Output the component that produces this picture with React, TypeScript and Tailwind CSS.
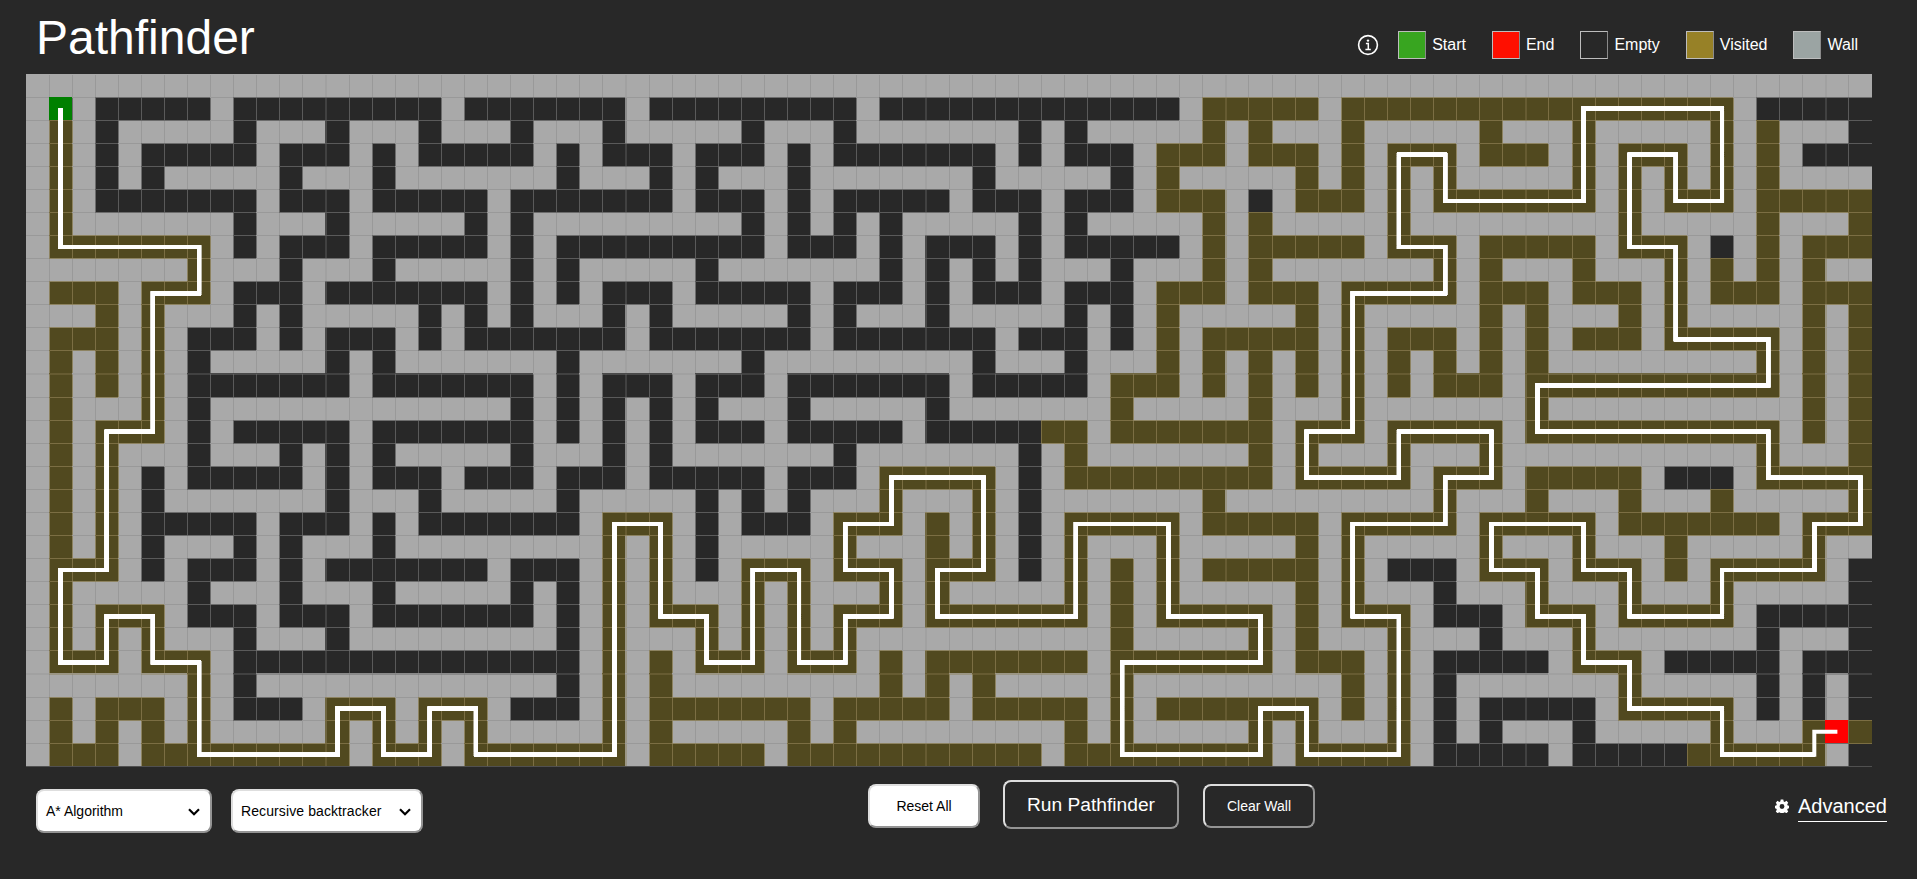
import React from "react";

const CELL = 23.075;
const COLS = 80;
const ROWS = 30;

// "#" wall, "." empty, "v" visited, "S" start, "E" end
const MAZE: string[] = [
  "####################" + "####################" + "####################" + "####################",
  "#S#.....#.........#." + "......#.........#..." + "..........#vvvvv#vvv" + "vvvvvvvvvvvvvv#.....",
  "#v#.#####.###.###.##" + "#.###.#####.###.####" + "###.#.#####v#v###v##" + "###v###v#####v#v###.",
  "#v#.#.....#...#.#..." + "..#.#...#...#.#....." + "..#.#...#vvv#vvv#v#v" + "vv#vvv#v#vvv#v#v#...",
  "#v#.#.#####.###.####" + "###.###.#.###.######" + "#.#####.#v#####v#v#v" + "#v#####v#v#v#v#v####",
  "#v#.......#...#....." + "#.......#...#.#....." + "#...#...#vvv#.#vvv#v" + "#vvvvvvv#v#vvv#vvvvv",
  "#v#######.###.#####." + "#.#########.#.#.#.##" + "###.#.#####v#v#####v" + "#########v#####v###v",
  "#vvvvvvv#.#...#....." + "#.#.........#...#.#." + "..#.#.....#v#vvvvv#v" + "vv#vvvvv#vvv#.#v#vvv",
  "#######v###.###.####" + "#.#.#####.#######.#." + "#.#.###.###v#v######" + "#v#v###v###v#v#v#v##",
  "#vvv#vvv#...#......." + "#.#.#...#.....#...#." + "#...#...#vvv#vvv#vvv" + "vv#vvv#vvv#v#vvv#vvv",
  "###v#v###.#.#####.#." + "#.###.#.#####.#.###." + "#####.#.#v#####v#v##" + "###v#v###v#v#####v#v",
  "#vvv#v#...#.#...#.#." + "......#.......#....." + "..#...#.#v#vvvvv#v#v" + "vv#v#v#vvv#vvvvv#v#v",
  "#v#v#v#.#####.#.####" + "###.#######.########" + "#.###.###v#v#v#v#v#v" + "#v#v#v#########v#v#v",
  "#v#v#v#.......#....." + "..#.#...#...#......." + "#.....#vvv#v#v#v#v#v" + "#vvv#vvvvvvvvvvv#v#v",
  "#v###v#.############" + "#.#.#.#.#.###.#####." + "#######v#####v###v##" + "#####v###########v#v",
  "#v#vvv#.#.....#....." + "..#.#.#.#...#.....#." + "....vv#vvvvvvv#vvv#v" + "vvvv#vvvvvvvvvvv#v#v",
  "#v#v###.###.#.#.####" + "#.###.#.#######.####" + "###.#v#######v#v###v" + "###v###########v###v",
  "#v#v#.#.....#.#...#." + "..#...#.....#...#vvv" + "vv#.#vvvvvvvvv#vvvvv" + "#vvv#vvvvv#...#vvvvv",
  "#v#v#.#######.###.##" + "###.#####.#.#.###v##" + "#v#.#######v########" + "#v###v###v###v#####v",
  "#v#v#.....#...#.#..." + "....#vvv#.#...#vvv#v" + "#v#.#vvvvv#vvvvv#vvv" + "vv#vvvvv#vvvvvvv#vvv",
  "#v#v#.###.#.###.####" + "#####v#v#.#####v###v" + "#v#.#v###v#####v#v##" + "###v###v###v#####v##",
  "#vvv#.#...#.#......." + "#...#v#v#.#vvv#vvv#v" + "vv#.#v#v#v#vvvvv#v#." + "..#vvv#vvv#v#vvvvv#.",
  "#v#####.###.###.####" + "#.#.#v#v###v#v###v#v" + "#####v#v#v#####v#v##" + "#.###v###v###v#####.",
  "#v#vvv#...#...#....." + "..#.#v#vvv#v#v#vvv#v" + "vvvvvv#v#vvvvv#v#vvv" + "#...#vvv#vvvvv#.....",
  "#v#v#v###.###.######" + "###.#v###v#v#v#v####" + "#######v#####v#v###v" + "###.###v#######.###.",
  "#vvv#vvv#..........." + "....#v#v#vvv#vvv#v#v" + "vvvvvv#vvvvvvv#vvv#v" + "#.....#vvv#.....#...",
  "#######v#.##########" + "###.#v#v#########v#v" + "#v#####v#########v#v" + "#.#######v#####.#.#.",
  "#v#vvv#v#...#vvv#vvv" + "#...#v#vvvvvvv#vvvvv" + "#vvvvv#v#vvvvvvv#v#v" + "#.#.....#vvvvv#.#.#.",
  "#v#v#v#v#####v#v#v#v" + "#####v#v#####v#v####" + "#####v#v#####v#v###v" + "#.#.###.#####v###vEv",
  "#vvv#vvvvvvvvv#vvv#v" + "vvvvvv#vvvvv#vvvvvvv" + "vvvv#vvvvvvvvv#vvvvv" + "#.....#.....vvvvvv#.",
];

const ROUTE: [number, number][] = [
  [1, 1], [1, 7], [7, 7], [7, 9], [5, 9], [5, 15], [3, 15], [3, 21], [1, 21], [1, 25],
  [3, 25], [3, 23], [5, 23], [5, 25], [7, 25], [7, 29], [13, 29], [13, 27], [15, 27], [15, 29],
  [17, 29], [17, 27], [19, 27], [19, 29], [25, 29], [25, 19], [27, 19], [27, 23], [29, 23], [29, 25],
  [31, 25], [31, 21], [33, 21], [33, 25], [35, 25], [35, 23], [37, 23], [37, 21], [35, 21], [35, 19],
  [37, 19], [37, 17], [41, 17], [41, 21], [39, 21], [39, 23], [45, 23], [45, 19], [49, 19], [49, 23],
  [53, 23], [53, 25], [47, 25], [47, 29], [53, 29], [53, 27], [55, 27], [55, 29], [59, 29], [59, 23],
  [57, 23], [57, 19], [61, 19], [61, 17], [63, 17], [63, 15], [59, 15], [59, 17], [55, 17], [55, 15],
  [57, 15], [57, 9], [61, 9], [61, 7], [59, 7], [59, 3], [61, 3], [61, 5], [67, 5], [67, 1],
  [73, 1], [73, 5], [71, 5], [71, 3], [69, 3], [69, 7], [71, 7], [71, 11], [75, 11], [75, 13],
  [65, 13], [65, 15], [75, 15], [75, 17], [79, 17], [79, 19], [77, 19], [77, 21], [73, 21], [73, 23],
  [69, 23], [69, 21], [67, 21], [67, 19], [63, 19], [63, 21], [65, 21], [65, 23], [67, 23], [67, 25],
  [69, 25], [69, 27], [73, 27], [73, 29], [77, 29], [77, 28], [78, 28],
];

const FILLS: Record<string, string> = {
  "#": "#a9a9a9",
  ".": "#282828",
  v: "#51491f",
  S: "#008000",
  E: "#ff0000",
};

const edge = (i: number) => Math.floor(i * CELL);

const toPoints = (pts: [number, number][]) =>
  pts.map(([c, r]) => `${((c + 0.5) * CELL).toFixed(2)},${((r + 0.5) * CELL).toFixed(2)}`).join(" ");

function Runs() {
  const rects: React.ReactElement[] = [];
  MAZE.forEach((row, r) => {
    let c = 0;
    while (c < COLS) {
      let n = c + 1;
      while (n < COLS && row[n] === row[c]) n++;
      rects.push(
        <rect key={`${r}-${c}`} x={edge(c)} y={edge(r)} width={edge(n) - edge(c)} height={edge(r + 1) - edge(r)} fill={FILLS[row[c]]} />,
      );
      c = n;
    }
  });
  return <g shapeRendering="crispEdges">{rects}</g>;
}

// Colour of the hairline between two neighbouring cells.
const lineColour = (a: string, b: string) => {
  const pair = [a, b];
  if (pair.includes("v")) return pair.includes("#") ? "#8d8361" : "#7b6e43";
  if (a === "#" && b === "#") return "#999999";
  return pair.includes("#") ? "#6c6c6c" : "#5a5a5a";
};

const line = (i: number) => (i % 13 === 0 ? { size: 2, opacity: 0.5 } : { size: 1, opacity: 1 });

function GridLines() {
  const rects: React.ReactElement[] = [];
  for (let r = 0; r < ROWS; r++) {
    for (let c = 0; c < COLS; c++) {
      const cell = MAZE[r][c];
      if (c > 0) {
        const l = line(c);
        rects.push(
          <rect key={`v${r}-${c}`} x={edge(c)} y={edge(r) + 1} width={l.size} height={edge(r + 1) - edge(r) - 1} fill={lineColour(MAZE[r][c - 1], cell)} fillOpacity={l.opacity} />,
        );
      }
      if (r > 0) {
        const l = line(r);
        rects.push(
          <rect key={`h${r}-${c}`} x={edge(c)} y={edge(r)} width={edge(c + 1) - edge(c)} height={l.size} fill={lineColour(MAZE[r - 1][c], cell)} fillOpacity={l.opacity} />,
        );
      }
    }
  }
  return (
    <g shapeRendering="crispEdges">
      {rects}
      <rect x={0} y={692} width={1846} height={1} fill="#505050" />
    </g>
  );
}

function Endpoint({ col, row, kind }: { col: number; row: number; kind: string }) {
  return <rect x={edge(col)} y={edge(row)} width={23} height={23} fill={FILLS[kind]} shapeRendering="crispEdges" />;
}

function MazeBoard() {
  const body = toPoints(ROUTE.slice(0, -2));
  const whole = toPoints(ROUTE);
  return (
    <svg width="1846" height="693" viewBox="0 0 1846 693" className="block">
      <Runs />
      <GridLines />
      <Endpoint col={1} row={1} kind="S" />
      <Endpoint col={78} row={28} kind="E" />
      <g fill="none" stroke="#fff" strokeWidth="4">
        {Array.from({ length: 16 }, (_, i) => (
          <polyline key={i} points={body} />
        ))}
        <polyline points={whole} />
      </g>
    </svg>
  );
}

function LegendItem({ label, swatch }: { label: string; swatch: string }) {
  return (
    <div className="flex items-center gap-1.5">
      <span className={`block size-7 border border-t-[#bdbdbd] border-l-[#bdbdbd] border-r-[#8a8a8a] border-b-[#bdbdbd] ${swatch}`} />
      <span className="text-base leading-none">{label}</span>
    </div>
  );
}

function Chevron() {
  return (
    <svg width="12" height="8" viewBox="0 0 12 8" className="mt-0.5">
      <path d="M1 1.2 6 6.2 11 1.2" fill="none" stroke="#000" strokeWidth="2.2" />
    </svg>
  );
}

const OUTSET = "rounded-lg border-2 border-t-[#dedede] border-l-[#dedede] border-r-[#949494] border-b-[#949494]";

export default function App() {
  return (
    <div className="flex h-[879px] w-[1917px] flex-col overflow-hidden bg-[#282828] font-['Liberation_Sans',Arial,sans-serif] text-white">
      <header className="flex h-[74px] items-start justify-between pr-[59px] pl-9">
        <h1 className="pt-[10px] text-5xl leading-[55px]">Pathfinder</h1>
        <div className="flex items-center gap-[26px] pt-[31px]">
          <svg width="22" height="22" viewBox="0 0 22 22" className="mr-[-7px]">
            <circle cx="11" cy="11" r="9.4" fill="none" stroke="#fff" strokeWidth="1.6" />
            <circle cx="11" cy="6.6" r="1.2" fill="#fff" />
            <path d="M8.9 9.5h2.4v5.8M8.4 15.4h5.4" fill="none" stroke="#fff" strokeWidth="1.5" />
          </svg>
          <LegendItem label="Start" swatch="bg-[#38a520]" />
          <LegendItem label="End" swatch="bg-[#ff0f00]" />
          <LegendItem label="Empty" swatch="bg-[#282828]" />
          <LegendItem label="Visited" swatch="bg-[#978127]" />
          <LegendItem label="Wall" swatch="bg-[#9ba4a3]" />
        </div>
      </header>

      <main className="pl-[26px]">
        <MazeBoard />
      </main>

      <footer className="grid grid-cols-[868px_1fr_auto] pr-[30px] text-sm">
        <div className="flex gap-[19px] pt-[22px] pl-9 text-black">
          <button className={`flex h-11 w-44 items-center justify-between bg-white pr-2.5 pl-2 ${OUTSET}`}>
            <span>A* Algorithm</span>
            <Chevron />
          </button>
          <button className={`flex h-11 w-48 items-center justify-between bg-white pr-2.5 pl-2 ${OUTSET}`}>
            <span className="tracking-[0.1px]">Recursive backtracker</span>
            <Chevron />
          </button>
        </div>
        <div className="flex items-start pt-[13px]">
          <button className={`mt-1 h-11 w-28 bg-white text-black ${OUTSET}`}>Reset All</button>
          <button className={`ml-[23px] h-[49px] w-44 text-[19.2px] ${OUTSET}`}>Run Pathfinder</button>
          <button className={`mt-1 ml-6 h-11 w-28 ${OUTSET}`}>Clear Wall</button>
        </div>
        <div className="flex items-start gap-[9px] pt-[26px]">
          <svg width="14" height="14" viewBox="0 0 24 24" className="mt-[6px]">
            <path
              fill="#fff"
              fillRule="evenodd"
              d="M9.8 1h4.4l.7 3.2 1.9.8 2.8-1.8 3.1 3.1-1.8 2.8.8 1.9 2.3.7v4.2l-2.3.7-.8 1.9 1.8 2.8-3.1 3.1-2.8-1.8-1.9.8-.7 2.6H9.8l-.7-2.6-1.9-.8-2.8 1.8-3.1-3.1 1.8-2.8-.8-1.9-2.3-.7v-4.2l2.3-.7.8-1.9-1.8-2.8 3.1-3.1L7.2 5l1.9-.8zM12 8.6a4.2 4.2 0 1 0 0 8.4 4.2 4.2 0 0 0 0-8.4z"
            />
          </svg>
          <span className="border-b border-white pb-px text-xl leading-[27px]">Advanced</span>
        </div>
      </footer>
    </div>
  );
}
